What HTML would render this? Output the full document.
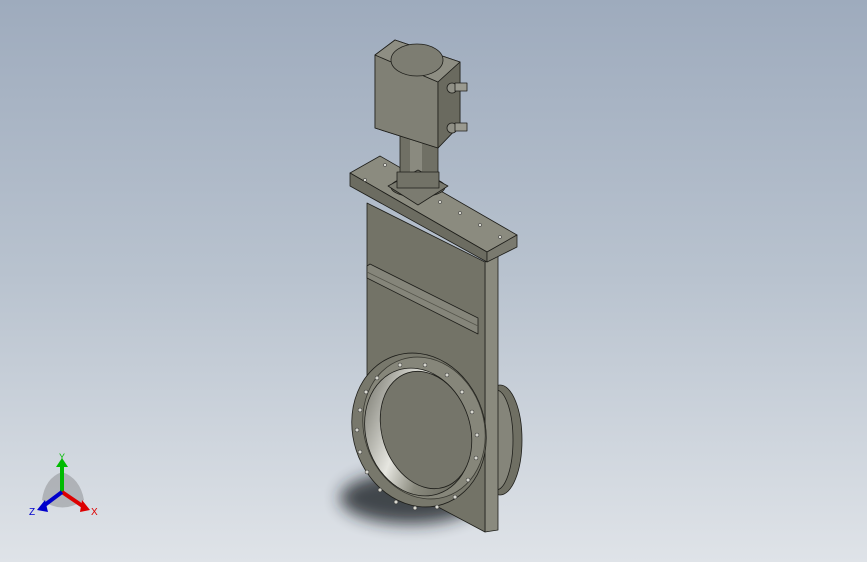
<!DOCTYPE html>
<html><head><style>
html,body{margin:0;padding:0}
body{width:867px;height:562px;overflow:hidden;background:linear-gradient(#9eabbd 0%,#b9c3cf 50%,#dfe3e8 100%)}
svg{position:absolute;left:0;top:0}
</style></head><body>
<svg width="867" height="562" viewBox="0 0 867 562">
<defs>
<filter id="bl" x="-50%" y="-50%" width="200%" height="200%"><feGaussianBlur stdDeviation="8"/></filter>
<linearGradient id="ring" x1="0" y1="0" x2="1" y2="1"><stop offset="0" stop-color="#5f5f55"/><stop offset="0.4" stop-color="#e6e6e0"/><stop offset="0.6" stop-color="#8a8a7e"/><stop offset="1" stop-color="#55554b"/></linearGradient>
</defs>
<ellipse cx="410" cy="498" rx="70" ry="26" fill="#1e2126" opacity="0.8" filter="url(#bl)"/>
<g stroke="#1e1e1a" stroke-width="0.8" stroke-linejoin="round">
<ellipse cx="500" cy="440" rx="22" ry="55" fill="#6f6f63"/>
<ellipse cx="496" cy="440" rx="17" ry="50" fill="#85857a"/>
<polygon points="485,262 498,255 498,530 485,532" fill="#8a8a7e"/>
<polygon points="367,203 485,262 485,532 440,508 367,470" fill="#737367"/>
<polygon points="367,266 370,264 478,318 478,334 367,278" fill="#85857a"/>
<line x1="367" y1="272" x2="478" y2="326" stroke="#55554b"/>
<polygon points="350,173 380,156 517,235 487,252" fill="#8b8b7f"/>
<polygon points="350,173 487,252 487,262 350,186" fill="#6c6c61"/>
<polygon points="487,252 517,235 517,247 487,262" fill="#7a7a6f"/>
<rect x="400" y="135" width="38" height="50" fill="#707065"/>
<rect x="410" y="135" width="12" height="50" fill="#8a8a7f" stroke="none"/>
<ellipse cx="418" cy="187" rx="27" ry="10" fill="#6a6a5f"/>
<polygon points="388,186 418,170 448,186 418,205" fill="#7b7b70"/>
<rect x="397" y="172" width="42" height="16" fill="#727267"/>
<polygon points="375,55 395,40 460,62 460,125 438,148 375,128" fill="#77776b"/>
<polygon points="375,55 438,82 438,148 375,128" fill="#808075"/>
<polygon points="375,55 395,40 460,62 438,82" fill="#8e8e83"/>
<ellipse cx="417" cy="60" rx="26" ry="16" fill="#7d7d72"/>
<polygon points="438,82 460,62 460,125 438,148" fill="#6a6a5f"/>
<circle cx="452" cy="88" r="5" fill="#909086"/><rect x="455" y="83" width="12" height="8" fill="#9a9a90"/>
<circle cx="452" cy="128" r="5" fill="#909086"/><rect x="455" y="123" width="12" height="8" fill="#9a9a90"/>
<ellipse cx="419" cy="430" rx="66" ry="78" transform="rotate(-18 419 430)" fill="#78786c"/>
<ellipse cx="424" cy="428" rx="60" ry="72" transform="rotate(-18 424 428)" fill="#86867a" stroke="#3a3a33"/>
<ellipse cx="418" cy="432" rx="52" ry="65" transform="rotate(-18 418 432)" fill="url(#ring)"/>
<ellipse cx="426" cy="430" rx="44" ry="60" transform="rotate(-18 426 430)" fill="#75756a"/>
</g>
<g fill="#d8d8d0" stroke="#222" stroke-width="0.5">
<circle cx="360" cy="410" r="2"/><circle cx="357" cy="430" r="2"/><circle cx="360" cy="452" r="2"/><circle cx="367" cy="472" r="2"/><circle cx="380" cy="490" r="2"/><circle cx="396" cy="502" r="2"/><circle cx="415" cy="508" r="2"/><circle cx="437" cy="507" r="2"/><circle cx="455" cy="497" r="2"/><circle cx="468" cy="480" r="2"/><circle cx="476" cy="458" r="2"/><circle cx="477" cy="435" r="2"/><circle cx="472" cy="412" r="2"/><circle cx="462" cy="392" r="2"/><circle cx="447" cy="375" r="2"/><circle cx="425" cy="365" r="2"/><circle cx="400" cy="365" r="2"/><circle cx="377" cy="378" r="2"/><circle cx="366" cy="392" r="2"/>
<circle cx="365" cy="180" r="1.6"/><circle cx="385" cy="165" r="1.6"/><circle cx="440" cy="202" r="1.6"/><circle cx="460" cy="213" r="1.6"/><circle cx="480" cy="225" r="1.6"/><circle cx="500" cy="237" r="1.6"/>
</g>
<g>
<path d="M42,500 Q45,478 62,472 Q80,478 84,500 Q62,515 42,500Z" fill="#8f9296" opacity="0.55"/>
<line x1="62" y1="492" x2="62" y2="466" stroke="#0b0" stroke-width="4"/>
<polygon points="56,467 62,458 68,467" fill="#0b0"/>
<line x1="62" y1="492" x2="84" y2="507" stroke="#d00" stroke-width="4"/>
<polygon points="82,500 90,510 80,512" fill="#d00"/>
<line x1="62" y1="492" x2="42" y2="507" stroke="#00c" stroke-width="4"/>
<polygon points="45,500 37,510 48,512" fill="#00c"/>
<text x="59" y="460" font-family="Liberation Sans,sans-serif" font-size="9" fill="#0b0">Y</text>
<text x="91" y="515" font-family="Liberation Sans,sans-serif" font-size="10" fill="#d00">X</text>
<text x="29" y="515" font-family="Liberation Sans,sans-serif" font-size="10" fill="#00c">Z</text>
</g>
</svg>
</body></html>
